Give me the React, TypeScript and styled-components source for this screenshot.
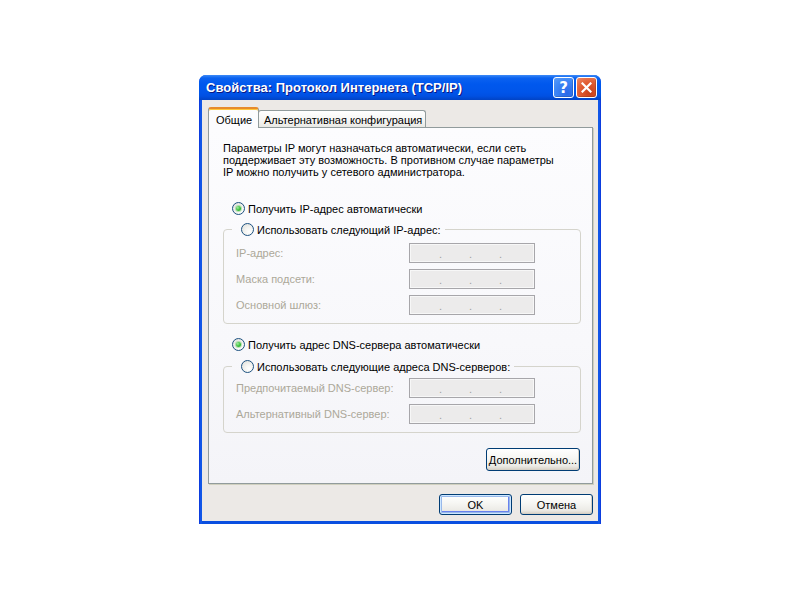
import React from "react";
import styled, { createGlobalStyle } from "styled-components";

const Global = createGlobalStyle`
  html, body { margin: 0; padding: 0; background: #ffffff; }
  body { font-family: "Liberation Sans", Arial, sans-serif; }
`;

const Page = styled.div`
  width: 800px;
  height: 600px;
  display: flex;
  align-items: flex-start;
  justify-content: flex-start;
  padding: 75px 0 0 199px;
  box-sizing: border-box;
`;

const Window = styled.div`
  width: 402px;
  height: 449px;
  box-sizing: border-box;
  display: flex;
  flex-direction: column;
  border-radius: 7px 7px 0 0;
  overflow: hidden;
  padding: 0 3px 3px 3px;
  background: linear-gradient(90deg, #0831d9 0px, #1660ee 2px, #0a4fe0 3px, #0a4fe0 calc(100% - 3px), #1660ee calc(100% - 2px), #0831d9 100%);
`;

const TitleBar = styled.div`
  height: 25px;
  margin: 0 -3px;
  padding: 0 4px 0 7px;
  display: flex;
  align-items: center;
  flex-shrink: 0;
  background: linear-gradient(180deg, #3d8bf7 0px, #0b62f0 3px, #0058ee 9px, #0055ea 17px, #0050e2 21px, #0143c4 25px);
`;

const Title = styled.div`
  flex: 1;
  color: #ffffff;
  font-family: "Liberation Sans", Arial, sans-serif;
  font-weight: bold;
  font-size: 13px;
  text-shadow: 1px 1px 0 #0a1883;
  white-space: nowrap;
`;

const CaptionButton = styled.div<{ $kind: "help" | "close" }>`
  width: 21px;
  height: 21px;
  box-sizing: border-box;
  margin-left: 2px;
  border: 1px solid #ffffff;
  border-radius: 3px;
  display: flex;
  align-items: center;
  justify-content: center;
  color: #ffffff;
  font-family: "DejaVu Sans", sans-serif;
  font-weight: bold;
  font-size: 15px;
  background: ${(p) =>
    p.$kind === "help"
      ? "radial-gradient(circle at 70% 80%, #2a68e8 0%, #3d86f6 60%, #5a9cf8 100%)"
      : "radial-gradient(circle at 70% 80%, #c8401a 0%, #e25d33 55%, #ec8a68 100%)"};
  box-shadow: inset -1px -1px 0 rgba(0, 0, 0, 0.15);
`;

const Body = styled.div`
  flex: 1;
  background: #ece9e6;
  padding: 7px 5px 5px 6px;
  display: flex;
  flex-direction: column;
`;

const TabRow = styled.div`
  display: flex;
  align-items: flex-end;
  height: 20px;
  position: relative;
  z-index: 1;
`;

const Tab = styled.div<{ $active?: boolean }>`
  box-sizing: border-box;
  font-size: 11px;
  color: #000;
  border: 1px solid #919b9c;
  border-bottom: none;
  border-radius: 3px 3px 0 0;
  display: flex;
  align-items: center;
  white-space: nowrap;
  ${(p) =>
    p.$active
      ? `
    height: 21px;
    margin-bottom: -1px;
    padding: 2px 7px 0 7px;
    background: #fcfcfe;
    border-top: 2px solid #e68b2c;
    box-shadow: inset 0 1px 0 #ffc73c;
    width: 51px;
  `
      : `
    height: 17px;
    padding: 1px 5px 0 5px;
    margin-left: -1px;
    background: linear-gradient(180deg, #ffffff 0%, #f5f5f3 60%, #e8e8e3 100%);
    width: 168px;
  `}
`;

const Panel = styled.div`
  box-sizing: border-box;
  width: 385px;
  height: 357px;
  border: 1px solid #919b9c;
  background: linear-gradient(180deg, #fcfcfe 0%, #f8f8fb 60%, #f4f4f8 100%);
  padding: 14px 11px 0 14px;
  display: flex;
  flex-direction: column;
  box-shadow: 1px 1px 0 #d0d0bf;
`;

const Intro = styled.p`
  margin: 0;
  font-size: 11px;
  line-height: 12px;
  color: #000;
  width: 340px;
`;

const RadioRow = styled.label<{ $mt?: number }>`
  display: flex;
  align-items: center;
  height: 13px;
  margin-top: ${(p) => p.$mt ?? 0}px;
  padding-left: 9px;
  font-size: 11px;
  color: #000;
  white-space: nowrap;
`;

const RadioCircle = styled.span<{ $checked?: boolean }>`
  width: 13px;
  height: 13px;
  box-sizing: border-box;
  border-radius: 50%;
  border: 1px solid #1c5180;
  background: radial-gradient(circle at 65% 70%, #ffffff 0%, #f4f4f1 40%, #dcdcd7 100%);
  margin-right: 3px;
  display: flex;
  align-items: center;
  justify-content: center;
  flex-shrink: 0;
  &::after {
    content: "";
    display: ${(p) => (p.$checked ? "block" : "none")};
    width: 5px;
    height: 5px;
    border-radius: 50%;
    background: radial-gradient(circle at 35% 35%, #a0eda0 0%, #3fc13f 50%, #21a121 100%);
    box-shadow: 0 0 0 1px rgba(60, 180, 60, 0.35);
  }
`;

const Group = styled.fieldset<{ $pt: number; $pb: number; $mt: number }>`
  margin: ${(p) => p.$mt}px 0 0 0;
  width: 358px;
  box-sizing: border-box;
  border: 1px solid #d5d4cc;
  border-radius: 4px;
  padding: ${(p) => p.$pt}px 0 ${(p) => p.$pb}px 12px;
  display: flex;
  flex-direction: column;
  gap: 6px;
`;

const Legend = styled.legend`
  padding: 0 4px 0 0;
  margin-left: -4px;
  display: flex;
`;

const FieldRow = styled.div`
  display: flex;
  align-items: center;
  height: 20px;
`;

const FieldLabel = styled.span`
  width: 173px;
  font-size: 11px;
  color: #aca899;
  white-space: nowrap;
`;

const IpBox = styled.div`
  width: 126px;
  height: 20px;
  box-sizing: border-box;
  border: 1px solid #a7a6aa;
  box-shadow: inset 0 0 0 1px #f7f7f7;
  background: #ecebeb;
  display: flex;
  padding-left: 2px;
`;

const IpDot = styled.span`
  width: 30px;
  text-align: right;
  font-size: 11px;
  line-height: 20px;
  color: #a0a0a0;
`;

const XpButton = styled.button<{ $default?: boolean; $w: number }>`
  width: ${(p) => p.$w}px;
  height: ${(p) => (p.$default !== undefined ? 21 : 23)}px;
  box-sizing: border-box;
  border: 1px solid #003c74;
  border-radius: 3px;
  padding: 0;
  font-family: "Liberation Sans", Arial, sans-serif;
  font-size: 11px;
  color: #000;
  background: linear-gradient(180deg, #ffffff 0%, #f7f7f4 40%, #ecebe6 80%, #d6d0c5 100%);
  box-shadow: ${(p) =>
    p.$default
      ? "inset 0 0 0 1px #cee7ff, inset 0 0 0 2px #98b8ea, inset -1px -1px 0 2px #6982ee"
      : "inset -1px -1px 0 0 #d6d0c5"};
`;

const AdvancedRow = styled.div`
  display: flex;
  justify-content: flex-end;
  margin-top: 15px;
  padding-right: 1px;
`;

const ButtonRow = styled.div`
  display: flex;
  justify-content: flex-end;
  gap: 8px;
  margin-top: 10px;
`;

const Field = ({ label }: { label: string }) => (
  <FieldRow>
    <FieldLabel>{label}</FieldLabel>
    <IpBox>
      <IpDot>.</IpDot>
      <IpDot>.</IpDot>
      <IpDot>.</IpDot>
    </IpBox>
  </FieldRow>
);

export default function App() {
  return (
    <>
      <Global />
      <Page>
        <Window>
          <TitleBar>
            <Title>Свойства: Протокол Интернета (TCP/IP)</Title>
            <CaptionButton $kind="help">?</CaptionButton>
            <CaptionButton $kind="close">
              <svg width="11" height="11" viewBox="0 0 11 11">
                <path d="M1.5 1.5 L9.5 9.5 M9.5 1.5 L1.5 9.5" stroke="#fff" strokeWidth="2.2" strokeLinecap="square" />
              </svg>
            </CaptionButton>
          </TitleBar>
          <Body>
            <TabRow>
              <Tab $active>Общие</Tab>
              <Tab>Альтернативная конфигурация</Tab>
            </TabRow>
            <Panel>
              <Intro>
                Параметры IP могут назначаться автоматически, если сеть поддерживает эту возможность. В противном случае параметры IP можно получить у сетевого администратора.
              </Intro>
              <RadioRow $mt={24}>
                <RadioCircle $checked />
                Получить IP-адрес автоматически
              </RadioRow>
              <Group $mt={8} $pt={7} $pb={8}>
                <Legend>
                  <RadioRow>
                    <RadioCircle />
                    Использовать следующий IP-адрес:
                  </RadioRow>
                </Legend>
                <Field label="IP-адрес:" />
                <Field label="Маска подсети:" />
                <Field label="Основной шлюз:" />
              </Group>
              <RadioRow $mt={14}>
                <RadioCircle $checked />
                Получить адрес DNS-сервера автоматически
              </RadioRow>
              <Group $mt={9} $pt={5} $pb={8}>
                <Legend>
                  <RadioRow>
                    <RadioCircle />
                    Использовать следующие адреса DNS-серверов:
                  </RadioRow>
                </Legend>
                <Field label="Предпочитаемый DNS-сервер:" />
                <Field label="Альтернативный DNS-сервер:" />
              </Group>
              <AdvancedRow>
                <XpButton $w={94}>Дополнительно...</XpButton>
              </AdvancedRow>
            </Panel>
            <ButtonRow>
              <XpButton $default $w={73}>OK</XpButton>
              <XpButton $default={false} $w={73}>Отмена</XpButton>
            </ButtonRow>
          </Body>
        </Window>
      </Page>
    </>
  );
}
